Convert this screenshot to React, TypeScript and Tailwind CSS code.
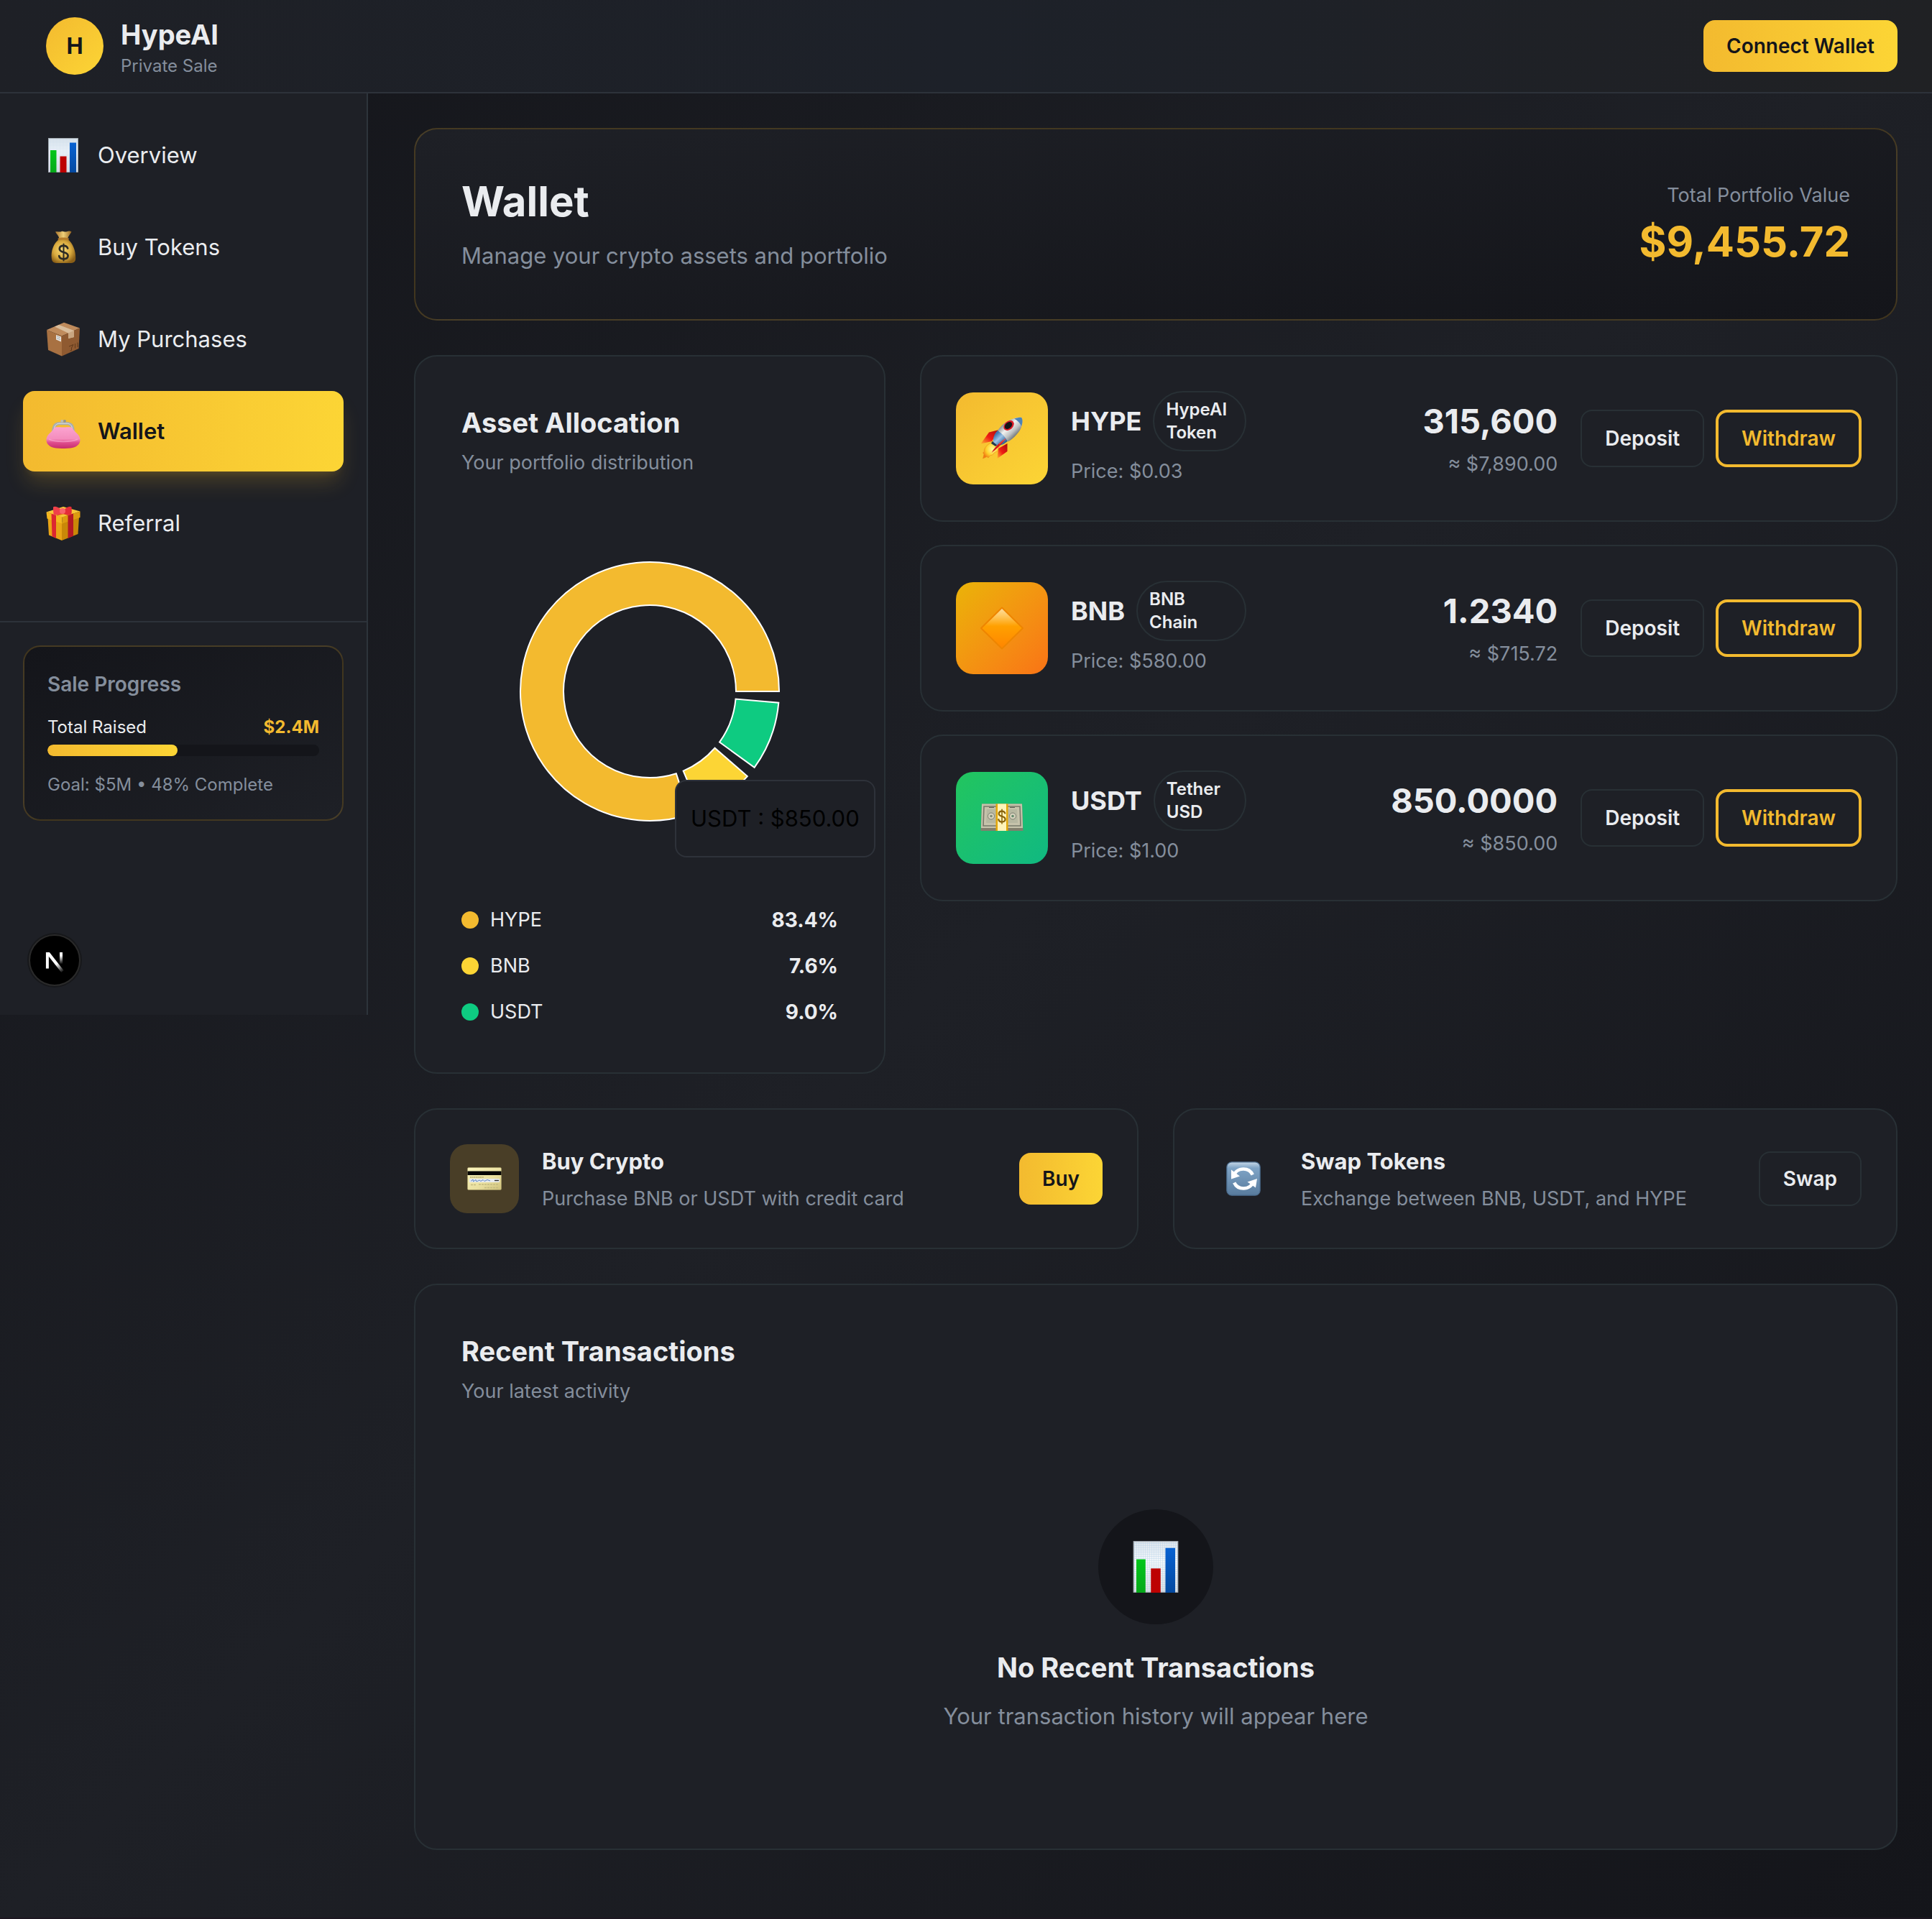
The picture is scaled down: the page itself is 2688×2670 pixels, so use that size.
import React from "react";

type IconProps = { className?: string };

function ChartIcon({ className }: IconProps) {
  return (
    <svg viewBox="0 0 48 48" className={className} aria-hidden="true">
      <defs>
        <linearGradient id="chartPaper" x1="0" y1="0" x2="0" y2="1">
          <stop offset="0" stopColor="#dfe6ec" />
          <stop offset="0.4" stopColor="#f4f8fb" />
          <stop offset="1" stopColor="#dcdfe3" />
        </linearGradient>
        <pattern id="chartGrid" width="2" height="2" patternUnits="userSpaceOnUse">
          <path d="M0 0H2M0 0V2" stroke="#a9c9e6" strokeWidth="0.6" />
        </pattern>
        <linearGradient id="chartGreen" x1="0" y1="0" x2="0" y2="1">
          <stop offset="0" stopColor="#03c71c" />
          <stop offset="1" stopColor="#06a81a" />
        </linearGradient>
        <linearGradient id="chartBlue" x1="0" y1="0" x2="0" y2="1">
          <stop offset="0" stopColor="#0862d2" />
          <stop offset="1" stopColor="#0449a0" />
        </linearGradient>
      </defs>
      <rect x="3.5" y="0.5" width="41" height="47" fill="url(#chartPaper)" stroke="#aab2ba" strokeWidth="0.8" />
      <rect x="4" y="1" width="40" height="46" fill="url(#chartGrid)" opacity="0.7" />
      <rect x="6" y="17" width="8.5" height="31" fill="url(#chartGreen)" />
      <rect x="19.5" y="25.5" width="9" height="22.5" fill="#bd0202" />
      <rect x="33" y="6.5" width="9" height="41.5" fill="url(#chartBlue)" />
    </svg>
  );
}

function MoneyBagIcon({ className }: IconProps) {
  return (
    <svg viewBox="0 0 48 48" className={className} aria-hidden="true">
      <defs>
        <radialGradient id="bagBody" cx="0.45" cy="0.45" r="0.6">
          <stop offset="0" stopColor="#f8dc79" />
          <stop offset="0.6" stopColor="#d9aa3e" />
          <stop offset="1" stopColor="#8a5f17" />
        </radialGradient>
        <linearGradient id="bagNeck" x1="0" x2="1">
          <stop offset="0" stopColor="#a9752c" />
          <stop offset="0.5" stopColor="#efcf78" />
          <stop offset="1" stopColor="#96641f" />
        </linearGradient>
      </defs>
      <path d="M13 2.5C17 1.5 19 3.500 21.500 2C24 1 26 3.500 29 2.200C32 1.200 34 1.500 35.500 2.600C33.500 6 31 8.500 30 12H18.500C17.500 8 15 6 13 2.500Z" fill="url(#bagNeck)" />
      <path d="M18 13C11 18 6.500 29 7.800 39.500C8.300 44.500 11 46 16 46H33C38.500 46 41 44.500 41.200 39.500C41.600 29 37 18 30.500 13Z" fill="url(#bagBody)" />
      <path d="M17 11.500C20 10 28 10 31.500 11.500C32.500 13 31.500 14 30 14C26 13.200 22 13.200 18.500 14C16.500 14 16 12.800 17 11.500Z" fill="#b67d2b" />
      <g fill="none" stroke="#2d2b24" strokeWidth="2.700" strokeLinecap="round">
        <path d="M30.200 25.500C29.500 22.800 27.300 21.800 24.400 21.800C21.200 21.800 18.800 23.400 18.800 26.300C18.800 32.600 30.600 29.400 30.600 35.800C30.600 38.800 28 40.300 24.600 40.300C21.200 40.300 18.700 39 18.200 36" />
        <path d="M24.500 19.500V42.500" strokeWidth="2" />
      </g>
    </svg>
  );
}

function PackageIcon({ className }: IconProps) {
  return (
    <svg viewBox="0 0 48 48" className={className} aria-hidden="true">
      <path d="M1 11L25 0.800L47 8.500L22 19.500Z" fill="#bf8b5c" />
      <path d="M1 11L22 19.500V47.500L3 39Z" fill="#a87142" />
      <path d="M22 19.500L47 8.500L45.500 37L22 47.500Z" fill="#8f5a31" />
      <path d="M12 6.500L18 4L39 12V21L31 23V15.500Z" fill="#d9bd9c" />
      <path d="M31 15.500L39 12V21L31 23Z" fill="#c9a681" />
      <path d="M14 18L21 20.500V27.500L14 24.500Z" fill="#e9e5df" />
      <path d="M15 20L20 22M15 22.500L20 24.500" stroke="#8d99a6" strokeWidth="0.800" />
      <path d="M32 34L38 31.500L35.500 36V39.500L33.500 40M40.500 30V36.500M44 28.500V35" stroke="#5f391b" strokeWidth="1" fill="none" />
    </svg>
  );
}

function PurseIcon({ className }: IconProps) {
  return (
    <svg viewBox="0 0 48 48" className={className} aria-hidden="true">
      <defs>
        <linearGradient id="purseBody" x1="0" y1="0" x2="0" y2="1">
          <stop offset="0" stopColor="#fba3d0" />
          <stop offset="0.550" stopColor="#f48dbd" />
          <stop offset="0.720" stopColor="#e04e8f" />
          <stop offset="1" stopColor="#c72c6c" />
        </linearGradient>
      </defs>
      <path d="M8 25C8.500 15 12 11.500 18 11.200H30C36 11.500 39.500 15 40 25L36 22C35 17 33 15.500 29 15.200H19C15 15.500 13 17 12 22Z" fill="#a9adb0" />
      <path d="M11 23C11.500 16 14 13.500 19 13.200H29C34 13.500 36.500 16 37 23" stroke="#dfe2e4" strokeWidth="1" fill="none" />
      <circle cx="22.200" cy="9.800" r="1.900" fill="#b9bcbe" />
      <circle cx="26" cy="9.800" r="1.900" fill="#8f9396" />
      <path d="M11 20C13 17.500 16 18.500 24 18.500C32 18.500 35 17.500 37 20C39 25 47.500 28 47.500 36C47.500 42.500 42 46.500 34 47.500C28 48.200 20 48.200 14 47.500C6 46.500 0.500 42.500 0.500 36C0.500 28 9 25 11 20Z" fill="url(#purseBody)" />
      <path d="M4 35C12 39.500 36 39.500 44 35" stroke="#fbb5d8" strokeWidth="1.500" fill="none" opacity="0.550" />
    </svg>
  );
}

function GiftIcon({ className }: IconProps) {
  return (
    <svg viewBox="0 0 48 48" className={className} aria-hidden="true">
      <path d="M2.500 17L22 23V48L4 40.500Z" fill="#e9a416" />
      <path d="M22 23L46 15.500L44.500 39L22 48Z" fill="#c98808" />
      <path d="M0.500 8.500L24 1L47.500 7.500L22.500 16Z" fill="#f7c637" />
      <path d="M0.500 8.500L22.500 15.500V24.500L1.500 17.500Z" fill="#f5b71f" />
      <path d="M22.500 15.500L47.500 7.500V16L22.500 24.500Z" fill="#dd9c10" />
      <path d="M7.500 10.700L14 13V45L8.500 42.300Z" fill="#dc2630" />
      <path d="M30.500 13L38 10.600V41.800L30.500 45Z" fill="#b51a24" />
      <path d="M15 12.500L21 9.500L27 9.500L33 12.500L30.500 13L24 11.500L16 13.500Z" fill="#e0641e" />
      <path d="M22 7C18 1 12.500 -0.500 10 1.500C10 6 10 9.500 11 12.500C15 13 19.500 12 23 9Z" fill="#f0414a" />
      <path d="M24 7C28 1 33.500 -0.500 35.500 1.500C36 6 36 9.500 35 12.500C31 13 26 12 23 9Z" fill="#e42d37" />
      <ellipse cx="23" cy="7" rx="4" ry="4" fill="#f8636a" />
    </svg>
  );
}

function RocketIcon({ className }: IconProps) {
  return (
    <svg viewBox="0 0 60 60" className={className} aria-hidden="true">
      <defs>
        <linearGradient id="rocketBody" x1="0.250" y1="0.250" x2="0.750" y2="0.750">
          <stop offset="0" stopColor="#8b9094" />
          <stop offset="0.350" stopColor="#f2f2f0" />
          <stop offset="0.700" stopColor="#bfc2c2" />
          <stop offset="1" stopColor="#6f7478" />
        </linearGradient>
        <linearGradient id="rocketBlue" x1="0.200" y1="0.200" x2="0.800" y2="0.800">
          <stop offset="0" stopColor="#3f76b0" />
          <stop offset="0.400" stopColor="#9cc3e6" />
          <stop offset="1" stopColor="#1f4d87" />
        </linearGradient>
        <linearGradient id="rocketFin" x1="1" y1="0" x2="0" y2="1">
          <stop offset="0" stopColor="#a80c0c" />
          <stop offset="0.550" stopColor="#ef1c14" />
          <stop offset="1" stopColor="#ffb52e" />
        </linearGradient>
        <radialGradient id="rocketFlame" cx="0.600" cy="0.400" r="0.650">
          <stop offset="0" stopColor="#fff89a" />
          <stop offset="0.600" stopColor="#ffd02a" />
          <stop offset="1" stopColor="#f07a12" />
        </radialGradient>
      </defs>
      <path d="M26 18L12 21.500L0.500 37.500L16 34Z" fill="url(#rocketFin)" />
      <path d="M37.500 37V48L23.500 58L25 44Z" fill="url(#rocketFin)" />
      <path d="M15 36C8 39 4 46 5.500 48L3.500 50L5 52L3.500 58L9 55.500L11 57L14 53.500L17 53L19 50L24 47.500L25.500 42Z" fill="url(#rocketFlame)" stroke="#e8841a" strokeWidth="0.500" />
      <path d="M16.500 34L20 35.500L23.500 39L21 41L15 37Z" fill="#26394d" />
      <path d="M24 19C18 25 17.500 31 18 35L24 40C30 39.500 36 37 41 30Z" fill="url(#rocketBlue)" />
      <path d="M24 19C32 7.500 45 0.500 57 0.800C60 7 58 17 50.500 24.500C46 29.500 42 33 38 34.500C35 28 30 23 24 19Z" fill="url(#rocketBody)" />
      <path d="M47 2.800C51 1 55 0.600 57 0.800C59.500 4 58.500 9.500 57 13C55.500 9 51.500 4.500 47 2.800Z" fill="#4b82b9" />
      <ellipse cx="39.500" cy="12" rx="8.200" ry="5.800" transform="rotate(-43 39.500 12)" fill="#dc1c27" />
      <ellipse cx="39" cy="12" rx="6" ry="4.200" transform="rotate(-43 39 12)" fill="#141519" />
      <path d="M35.500 30C30 33 22 39 15.500 50C22 45 28 40 35.500 30Z" fill="#d3161b" />
      <path d="M26 38L35 30.500" stroke="#ff6154" strokeWidth="1" />
    </svg>
  );
}

function DiamondIcon({ className }: IconProps) {
  return (
    <svg viewBox="0 0 60 60" className={className} aria-hidden="true">
      <defs>
        <linearGradient id="diamondFill" x1="0" y1="0" x2="0" y2="1">
          <stop offset="0" stopColor="#ffe0a3" />
          <stop offset="0.200" stopColor="#ffc860" />
          <stop offset="0.450" stopColor="#ffa000" />
          <stop offset="1" stopColor="#ff8500" />
        </linearGradient>
      </defs>
      <path d="M30 1.500L59 30L30 58.500L1 30Z" fill="url(#diamondFill)" stroke="#ee8500" strokeWidth="2" strokeLinejoin="round" />
    </svg>
  );
}

function CashIcon({ className }: IconProps) {
  return (
    <svg viewBox="0 0 60 60" className={className} aria-hidden="true">
      <path d="M2 10.500H58L59.500 48H0.500Z" fill="#817f6d" />
      <path d="M2 10.500H58L59 44H1Z" fill="#c6c3ab" />
      <path d="M5 14H55L56 41H4Z" fill="none" stroke="#77796a" strokeWidth="1.600" />
      <path d="M9 18H51L52 37H8Z" fill="#aeb09b" opacity="0.600" />
      <circle cx="15" cy="27.500" r="4.500" fill="#d6d3bd" stroke="#7c7e70" strokeWidth="1" />
      <circle cx="45" cy="27.500" r="4.500" fill="#d6d3bd" stroke="#7c7e70" strokeWidth="1" />
      <circle cx="15" cy="27.500" r="1.800" fill="#7c8a76" />
      <circle cx="45" cy="27.500" r="1.800" fill="#62886c" />
      <path d="M12 15.500H19M41 15.500H48" stroke="#5f6155" strokeWidth="1" />
      <path d="M21.500 10.500H38.500V48H21.500Z" fill="#e3a708" />
      <path d="M24 10.500H36V48H24Z" fill="#fff3b8" />
      <g fill="none" stroke="#866109" strokeWidth="2.200" strokeLinecap="round">
        <path d="M34.300 23.500C33.600 21.300 32.200 20.600 30 20.600C27.600 20.600 25.700 22 25.700 24.200C25.700 29 34.600 26.700 34.600 31.800C34.600 34.200 32.500 35.500 30 35.500C27.500 35.500 25.700 34.500 25.300 32" />
        <path d="M30 18.200V38" strokeWidth="1.500" />
      </g>
    </svg>
  );
}

function CreditCardIcon({ className }: IconProps) {
  return (
    <svg viewBox="0 0 48 48" className={className} aria-hidden="true">
      <defs>
        <linearGradient id="creditFace" x1="0" y1="0" x2="1" y2="1">
          <stop offset="0" stopColor="#fbf5bd" />
          <stop offset="0.600" stopColor="#e9df9f" />
          <stop offset="1" stopColor="#cfc17b" />
        </linearGradient>
      </defs>
      <rect x="0.500" y="8.500" width="47" height="31" rx="1.500" fill="url(#creditFace)" stroke="#a79d68" strokeWidth="0.600" />
      <rect x="0.500" y="13.500" width="47" height="5.500" fill="#050505" />
      <rect x="3" y="24" width="42" height="5" fill="#e8ebee" />
      <path d="M5 27.500L8 25L8.500 28L12 25.500L13 28L17 26L19 27.500L22 25.500L24 27.500L28 25.500L32 27" stroke="#5c86c8" strokeWidth="1" fill="none" />
      <path d="M38 26.500H44" stroke="#333" strokeWidth="1.400" />
      <path d="M4 21.800H23" stroke="#a59b66" strokeWidth="1.200" strokeDasharray="2 0.600" />
      <path d="M5 32.500H12M16 32H44M24 36.500H44" stroke="#c4ba80" strokeWidth="1.400" strokeDasharray="3 1" />
    </svg>
  );
}

function SwapIcon({ className }: IconProps) {
  return (
    <svg viewBox="0 0 48 48" className={className} aria-hidden="true">
      <defs>
        <linearGradient id="swapTile" x1="0" y1="0" x2="0" y2="1">
          <stop offset="0" stopColor="#c7d8e8" />
          <stop offset="0.180" stopColor="#7fa4c6" />
          <stop offset="1" stopColor="#587b9d" />
        </linearGradient>
      </defs>
      <rect x="0.800" y="0.800" width="46.400" height="46.400" rx="7" fill="url(#swapTile)" stroke="#48698a" strokeWidth="1.200" />
      <g fill="none" stroke="#ffffff" strokeWidth="4.600">
        <path d="M10.500 20.500C12 14 17.500 10.500 24 10.500C29.500 10.500 34.500 13.500 36.800 18.500" />
        <path d="M37.500 27.500C36 34 30.500 37.500 24 37.500C18.500 37.500 13.500 34.500 11.200 29.500" />
      </g>
      <path d="M7 11.500L7 24.500L19 20.500Z" fill="#ffffff" />
      <path d="M41 36.500L43 24L29.500 28.500Z" fill="#ffffff" />
    </svg>
  );
}

function NextMark({ className }: IconProps) {
  return (
    <svg viewBox="0 0 40 40" className={className} fill="none" aria-hidden="true">
      <defs>
        <linearGradient id="nextSlash" x1="23" y1="24" x2="31" y2="35" gradientUnits="userSpaceOnUse">
          <stop stopColor="#fff" />
          <stop offset="1" stopColor="#fff" stopOpacity="0" />
        </linearGradient>
        <linearGradient id="nextStem" x1="28" y1="14" x2="28" y2="25" gradientUnits="userSpaceOnUse">
          <stop stopColor="#fff" />
          <stop offset="1" stopColor="#fff" stopOpacity="0" />
        </linearGradient>
      </defs>
      <path d="M10.800 10V30.500" stroke="#fff" strokeWidth="3.600" />
      <path d="M9 10H13.500L31.500 33L28.500 35.500L10 12Z" fill="url(#nextSlash)" />
      <path d="M28.200 10V25" stroke="url(#nextStem)" strokeWidth="3.600" />
    </svg>
  );
}

const card = "rounded-[32px] border-2 border-[#283035] bg-[#1e2026]";
const cardTitle = "text-[38px] leading-14 font-bold";
const actionTitle = "text-[31px] leading-12 font-bold";
const mutedText = "text-[27px] leading-10 text-[#848e9c]";
const goldButton =
  "shrink-0 rounded-2xl bg-linear-to-r from-[#f3ba2f] to-[#fcd535] px-8 py-4 text-[28px] leading-10 font-semibold text-[#14151a]";
const plainButton =
  "shrink-0 rounded-2xl border-2 border-[#283035] px-8 py-4 text-[28px] leading-10 font-semibold text-[#eaecef]";
const outlineButton =
  "shrink-0 rounded-2xl border-4 border-[#f3ba2f] px-8 py-4 text-[28px] leading-10 font-semibold text-[#f3ba2f]";

const navItems = [
  { label: "Overview", Icon: ChartIcon },
  { label: "Buy Tokens", Icon: MoneyBagIcon },
  { label: "My Purchases", Icon: PackageIcon },
  { label: "Wallet", Icon: PurseIcon, active: true },
  { label: "Referral", Icon: GiftIcon },
];

const allocation = [
  { name: "HYPE", value: 7890, share: "83.4%", fill: "#f3ba2f", dot: "bg-[#f3ba2f]" },
  { name: "BNB", value: 715.72, share: "7.6%", fill: "#fcd535", dot: "bg-[#fcd535]" },
  { name: "USDT", value: 850, share: "9.0%", fill: "#0ecb81", dot: "bg-[#0ecb81]" },
];

const tokens = [
  {
    symbol: "HYPE",
    name: "HypeAI Token",
    price: "Price: $0.03",
    amount: "315,600",
    value: "≈ $7,890.00",
    tile: "from-[#f3ba2f] to-[#fcd535]",
    Icon: RocketIcon,
  },
  {
    symbol: "BNB",
    name: "BNB Chain",
    price: "Price: $580.00",
    amount: "1.2340",
    value: "≈ $715.72",
    tile: "from-[#eab308] to-[#f97316]",
    Icon: DiamondIcon,
  },
  {
    symbol: "USDT",
    name: "Tether USD",
    price: "Price: $1.00",
    amount: "850.0000",
    value: "≈ $850.00",
    tile: "from-[#22c55e] to-[#10b981]",
    Icon: CashIcon,
  },
];

function ringSlice(start: number, end: number, inner: number, outer: number) {
  const point = (deg: number, r: number) => {
    const a = (deg * Math.PI) / 180;
    return `${(r * Math.cos(a)).toFixed(2)} ${(-r * Math.sin(a)).toFixed(2)}`;
  };
  const large = end - start > 180 ? 1 : 0;
  return `M${point(start, outer)}A${outer} ${outer} 0 ${large} 0 ${point(end, outer)}L${point(end, inner)}A${inner} ${inner} 0 ${large} 1 ${point(start, inner)}Z`;
}

function AllocationChart() {
  const padAngle = 5;
  const total = allocation.reduce((sum, a) => sum + a.value, 0);
  let angle = 0;
  const slices = allocation.map((a) => {
    const sweep = (a.value / total) * (360 - padAngle * allocation.length);
    const d = ringSlice(angle, angle + sweep, 120, 180);
    angle += sweep + padAngle;
    return { d, fill: a.fill, name: a.name };
  });
  return (
    <div className="relative">
      <svg viewBox="-250 -250 500 500" className="h-[500px] w-full" role="img" aria-label="Asset allocation">
        {slices.map((s) => (
          <path key={s.name} d={s.d} fill={s.fill} stroke="#ffffff" strokeWidth="2" />
        ))}
      </svg>
      <div
        role="tooltip"
        className="absolute top-[373px] left-[297px] rounded-2xl border-2 border-[#2e323a] bg-[#1e2026] px-5 py-7 text-[31px] leading-12 whitespace-nowrap text-black"
      >
        USDT : $850.00
      </div>
    </div>
  );
}

function Header() {
  return (
    <header className="flex h-[130px] items-center justify-between border-b-2 border-[#2d323a] bg-linear-to-r from-[#1e2026] via-[#1d2129] to-[#202124] pr-12 pl-16">
      <div className="flex items-center gap-6">
        <div className="flex size-20 items-center justify-center rounded-full bg-linear-to-br from-[#f3ba2f] to-[#fcd535] text-[31px] font-bold text-[#14151a]">
          H
        </div>
        <div>
          <h1 className={cardTitle}>HypeAI</h1>
          <p className="text-2xl leading-8 text-[#848e9c]">Private Sale</p>
        </div>
      </div>
      <button type="button" className={goldButton}>
        Connect Wallet
      </button>
    </header>
  );
}

function Sidebar() {
  return (
    <aside className="relative w-lg shrink-0 self-start border-r-2 border-[#2d343b] bg-[#1e2026] pb-[270px]">
      <nav className="flex flex-col gap-4 px-8 pt-[30px] pb-20">
        {navItems.map(({ label, Icon, active }) => (
          <a
            key={label}
            href="#"
            aria-current={active ? "page" : undefined}
            className={
              active
                ? "flex h-28 items-center gap-6 rounded-2xl bg-linear-to-r from-[#f3ba2f] to-[#fcd535] px-8 text-[31px] font-semibold text-[#14151a] shadow-[0_20px_30px_-6px_rgba(243,186,47,0.2),0_8px_12px_-8px_rgba(243,186,47,0.2)]"
                : "flex h-28 items-center gap-6 rounded-2xl px-8 text-[31px]"
            }
          >
            <Icon className="size-12" />
            {label}
          </a>
        ))}
      </nav>
      <div className="border-t-2 border-[#2d323a] px-8 pt-8">
        <section className="rounded-3xl border-2 border-[#f3ba2f]/20 bg-linear-to-br from-[#14151a] to-[#1e2026] p-8">
          <h2 className="mb-6 text-[28px] leading-10 font-semibold text-[#848e9c]">Sale Progress</h2>
          <div className="flex justify-between text-2xl leading-8">
            <span>Total Raised</span>
            <span className="font-bold text-[#f3ba2f]">$2.4M</span>
          </div>
          <div
            role="progressbar"
            aria-label="Total raised"
            aria-valuenow={48}
            className="mt-2 h-4 overflow-hidden rounded-full bg-[#14151a]"
          >
            <div className="h-full w-[48%] rounded-full bg-linear-to-r from-[#f3ba2f] to-[#fcd535]" />
          </div>
          <p className="mt-6 text-2xl leading-8 text-[#848e9c]">Goal: $5M • 48% Complete</p>
        </section>
      </div>
      <button
        type="button"
        aria-label="Open developer tools"
        className="absolute bottom-10 left-10 flex size-18 items-center justify-center rounded-full border-2 border-[#2a2a2a] bg-black shadow-[0_0_0_2px_#17181b]"
      >
        <NextMark className="size-11" />
      </button>
    </aside>
  );
}

function TokenRow({ token }: { token: (typeof tokens)[number] }) {
  const { Icon } = token;
  return (
    <article className={`${card} flex items-center p-12`}>
      <div className={`flex size-32 shrink-0 items-center justify-center rounded-3xl bg-linear-to-br ${token.tile}`}>
        <Icon className="size-15" />
      </div>
      <div className="ml-8 w-61 shrink-0">
        <div className="flex items-center gap-4">
          <h3 className="text-4xl font-bold">{token.symbol}</h3>
          <span className="grow rounded-[42px] border-2 border-[#283035] px-4 py-2 text-2xl leading-8 font-semibold">
            {token.name}
          </span>
        </div>
        <p className={`mt-2 ${mutedText}`}>{token.price}</p>
      </div>
      <div className="mr-8 grow text-right">
        <p className="text-[47px] leading-16 font-bold">{token.amount}</p>
        <p className={`mt-2 ${mutedText}`}>{token.value}</p>
      </div>
      <div className="flex shrink-0 gap-4">
        <button type="button" className={plainButton}>
          Deposit
        </button>
        <button type="button" className={outlineButton}>
          Withdraw
        </button>
      </div>
    </article>
  );
}

export default function App() {
  return (
    <div className="min-h-screen border-b-2 border-[#1d1721] bg-linear-135 from-[#14151a] via-[#1e2026] to-[#14151a] font-['Inter','Noto_Sans',sans-serif] text-[#eaecef]">
      <Header />
      <div className="flex">
        <Sidebar />
        <main className="flex min-w-0 grow flex-col gap-12 pt-12 pr-12 pb-[94px] pl-16">
          <section className="flex items-center justify-between rounded-[32px] border-2 border-[#f3ba2f]/20 bg-linear-to-br from-[#1e2026] to-[#14151a] p-16">
            <div>
              <h2 className="text-[58px] leading-18 font-bold">Wallet</h2>
              <p className="mt-4 text-[31px] leading-12 text-[#848e9c]">Manage your crypto assets and portfolio</p>
            </div>
            <div className="text-right">
              <p className={mutedText}>Total Portfolio Value</p>
              <p className="mt-2 text-[58px] leading-18 font-bold text-[#f3ba2f]">$9,455.72</p>
            </div>
          </section>

          <div className="grid grid-cols-3 items-start gap-12">
            <section className={`${card} p-16`}>
              <h2 className={cardTitle}>Asset Allocation</h2>
              <p className={`mt-2 mb-12 ${mutedText}`}>Your portfolio distribution</p>
              <AllocationChart />
              <ul className="mt-12 flex flex-col gap-6 text-[27px] leading-10">
                {allocation.map((a) => (
                  <li key={a.name} className="flex items-center gap-4">
                    <span className={`size-6 rounded-full ${a.dot}`} />
                    <span>{a.name}</span>
                    <span className="ml-auto text-[28px] font-bold">{a.share}</span>
                  </li>
                ))}
              </ul>
            </section>
            <div className="col-span-2 flex flex-col gap-8">
              {tokens.map((t) => (
                <TokenRow key={t.symbol} token={t} />
              ))}
            </div>
          </div>

          <div className="grid grid-cols-2 gap-12">
            <section className={`${card} flex items-center gap-8 p-12`}>
              <div className="flex size-24 shrink-0 items-center justify-center rounded-3xl bg-[#f3ba2f]/20">
                <CreditCardIcon className="size-12" />
              </div>
              <div className="grow">
                <h3 className={actionTitle}>Buy Crypto</h3>
                <p className={`mt-2 ${mutedText}`}>Purchase BNB or USDT with credit card</p>
              </div>
              <button type="button" className={goldButton}>
                Buy
              </button>
            </section>
            <section className={`${card} flex items-center gap-8 p-12`}>
              <div className="flex size-24 shrink-0 items-center justify-center">
                <SwapIcon className="size-12" />
              </div>
              <div className="grow">
                <h3 className={actionTitle}>Swap Tokens</h3>
                <p className={`mt-2 ${mutedText}`}>Exchange between BNB, USDT, and HYPE</p>
              </div>
              <button type="button" className={plainButton}>
                Swap
              </button>
            </section>
          </div>

          <section className={`${card} p-16`}>
            <h2 className={cardTitle}>Recent Transactions</h2>
            <p className={`mt-2 mb-12 ${mutedText}`}>Your latest activity</p>
            <div className="flex flex-col items-center py-24 text-center">
              <div className="flex size-40 items-center justify-center rounded-full bg-[#14151a]">
                <ChartIcon className="size-18" />
              </div>
              <h3 className={`mt-8 ${cardTitle}`}>No Recent Transactions</h3>
              <p className="mt-4 text-[31px] leading-12 text-[#848e9c]">Your transaction history will appear here</p>
            </div>
          </section>
        </main>
      </div>
    </div>
  );
}
